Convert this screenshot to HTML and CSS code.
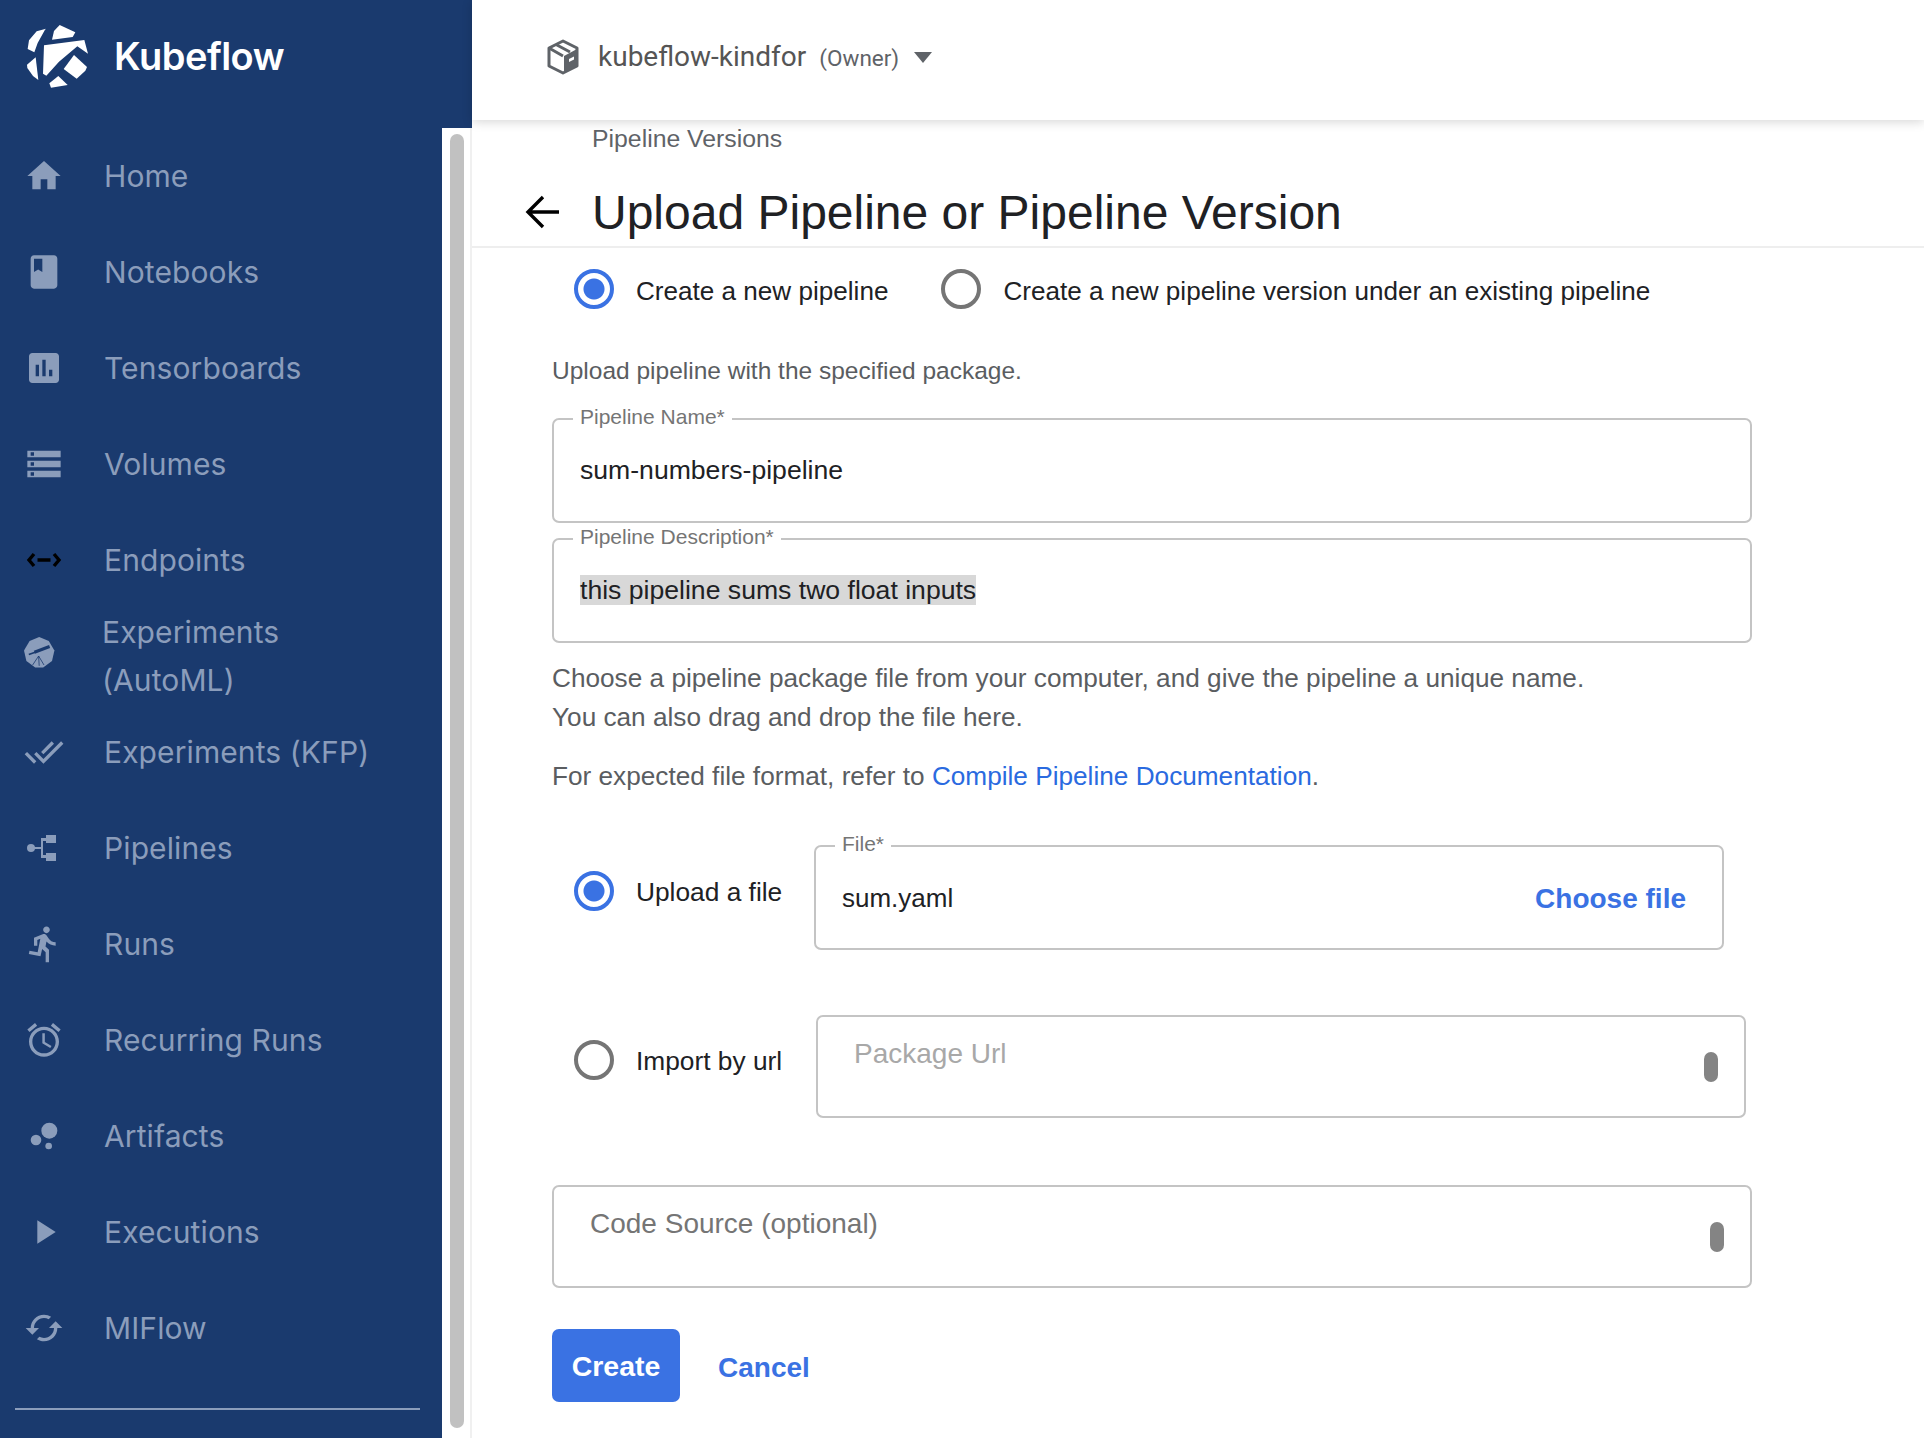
FILE: index.html
```html
<!DOCTYPE html>
<html lang="en">
<head>
<meta charset="utf-8">
<title>Kubeflow</title>
<link rel="stylesheet" href="styles.css">
</head>
<body>
<div class="app">
  <aside class="sidebar">
    <div class="brand">
      <svg class="brand-logo" viewBox="72 72 198 198"><g fill="#fff"><path d="M135 86l-3 3-22 40-10 28-20-10 4-26 23-27z"/><path d="M176 75l47 22-8 14-62 8 6-26z"/><path d="M129 136l121-16 11 41-32-22-55 46-38 42-10-6z"/><path d="M104 172l8 68-16-12-17-24-1-10z"/><path d="M219 165l39 36-5 11-26 24-39-29z"/><path d="M172 228l28 27-50 8-5-13z"/></g></svg>
      <span class="brand-name">Kubeflow</span>
    </div>
    <div class="side-body">
      <nav class="nav">
        <a class="nav-item"><svg class="nav-icon" viewBox="0 0 24 24"><path d="M10 20v-6h4v6h5v-8h3L12 3 2 12h3v8z"/></svg><span class="nav-label">Home</span></a>
        <a class="nav-item"><svg class="nav-icon" viewBox="0 0 24 24"><path d="M18 2H6c-1.1 0-2 .9-2 2v16c0 1.1.9 2 2 2h12c1.1 0 2-.9 2-2V4c0-1.1-.9-2-2-2zM6 4h5v8l-2.5-1.5L6 12V4z"/></svg><span class="nav-label">Notebooks</span></a>
        <a class="nav-item"><svg class="nav-icon" viewBox="0 0 24 24"><path d="M19 3H5c-1.1 0-2 .9-2 2v14c0 1.1.9 2 2 2h14c1.1 0 2-.9 2-2V5c0-1.1-.9-2-2-2zM9 17H7v-7h2v7zm4 0h-2V7h2v10zm4 0h-2v-4h2v4z"/></svg><span class="nav-label">Tensorboards</span></a>
        <a class="nav-item"><svg class="nav-icon" viewBox="0 0 24 24"><path d="M2 20h20v-4H2v4zm2-3h2v2H4v-2zM2 4v4h20V4H2zm4 3H4V5h2v2zm-4 7h20v-4H2v4zm2-3h2v2H4v-2z"/></svg><span class="nav-label">Volumes</span></a>
        <a class="nav-item"><svg class="nav-icon" viewBox="0 0 40 40"><path class="endpoint" d="M10 14l-5 6 5 6M30 14l5 6-5 6M13.500 20h13"/></svg><span class="nav-label">Endpoints</span></a>
        <a class="nav-item nav-item-auto"><svg class="nav-icon" viewBox="-4 -4 50 50"><path d="M20 1l12 5 7 12-3 13-11 8H15L4 31 1 18 8 6z"/><path class="scope" d="M19.300 24.750L11.800 36M19.300 24.750L20 37M19.300 24.750L26 36"/><path class="scope-thin" d="M7 23l8-3"/><path class="scope-bold" d="M14 20l19-7"/></svg><span class="nav-label nav-label-wrap">Experiments (AutoML)</span></a>
        <a class="nav-item"><svg class="nav-icon" viewBox="0 0 24 24"><path d="M18 7l-1.410-1.410-6.340 6.340 1.410 1.410L18 7zm4.240-1.410L11.660 16.170 7.480 12l-1.410 1.410L11.660 19l12-12-1.420-1.410zM.41 13.410L6 19l1.410-1.410L1.830 12 .41 13.410z"/></svg><span class="nav-label">Experiments (KFP)</span></a>
        <a class="nav-item"><svg class="nav-icon" viewBox="0 0 40 40"><circle cx="7" cy="20" r="4"/><path d="M9 19h8v-9h6v3h-4v14h4v3h-6V21H9z"/><rect x="22" y="7" width="10" height="8"/><rect x="22" y="25" width="10" height="8"/></svg><span class="nav-label">Pipelines</span></a>
        <a class="nav-item"><svg class="nav-icon" viewBox="0 0 24 24"><path d="M13.490 5.480c1.100 0 2-.9 2-2s-.9-2-2-2-2 .9-2 2 .9 2 2 2zm-3.600 13.900l1-4.400 2.100 2v6h2v-7.500l-2.100-2 .6-3c1.300 1.500 3.300 2.500 5.500 2.500v-2c-1.900 0-3.500-1-4.300-2.400l-1-1.600c-.4-.6-1-1-1.700-1-.3 0-.5.1-.8.1l-5.200 2.200v4.700h2v-3.400l1.800-.7-1.600 8.100-4.900-1-.4 2 7 1.400z"/></svg><span class="nav-label">Runs</span></a>
        <a class="nav-item"><svg class="nav-icon" viewBox="0 0 24 24"><path d="M22 5.720l-4.600-3.860-1.290 1.530 4.600 3.860L22 5.720zM7.880 3.390L6.600 1.860 2 5.710l1.290 1.530 4.590-3.850zM12.500 8H11v6l4.750 2.850.75-1.230-4-2.370V8zM12 4c-4.970 0-9 4.030-9 9s4.020 9 9 9c4.970 0 9-4.030 9-9s-4.030-9-9-9zm0 16c-3.870 0-7-3.130-7-7s3.130-7 7-7 7 3.130 7 7-3.130 7-7 7z"/></svg><span class="nav-label">Recurring Runs</span></a>
        <a class="nav-item"><svg class="nav-icon" viewBox="0 0 24 24"><circle cx="7.200" cy="14.400" r="3.200"/><circle cx="14.800" cy="18" r="2"/><circle cx="15.200" cy="8.800" r="4.800"/></svg><span class="nav-label">Artifacts</span></a>
        <a class="nav-item"><svg class="nav-icon" viewBox="0 0 24 24"><path d="M8 5v14l11-7z"/></svg><span class="nav-label">Executions</span></a>
        <a class="nav-item"><svg class="nav-icon" viewBox="0 0 24 24"><path d="M19 8l-4 4h3c0 3.310-2.690 6-6 6-1.010 0-1.970-.25-2.800-.7l-1.460 1.460C8.970 19.540 10.430 20 12 20c4.420 0 8-3.580 8-8h3l-4-4zM6 12c0-3.310 2.690-6 6-6 1.010 0 1.970.25 2.800.7l1.460-1.460C15.030 4.460 13.570 4 12 4c-4.420 0-8 3.580-8 8H1l4 4 4-4H6z"/></svg><span class="nav-label">MIFlow</span></a>
        <div class="nav-divider"></div>
      </nav>
      <div class="scroll-track"><div class="scroll-thumb"></div></div>
    </div>
  </aside>

  <main class="main">
    <header class="topbar">
      <svg class="ns-icon" viewBox="0 0 32 36"><path class="ns-outline" d="M16 2l14 7v18l-14 7-14-7V9z"/><path class="ns-fill" d="M17 17l13-7v17l-13 7z"/><path class="ns-outline" d="M2 9l14 8M9 5.500l14 7.500"/><path class="ns-tag" d="M22 20l5-2.500v3l-5 2.500z"/></svg>
      <span class="ns-name">kubeflow-kindfor</span>
      <span class="ns-role">(Owner)</span>
      <span class="ns-caret"></span>
    </header>

    <div class="crumb">Pipeline Versions</div>
    <div class="titlebar">
      <svg class="back" viewBox="0 0 36 36"><path d="M34 18H3M18 3L3 18l15 15"/></svg>
      <h1 class="title">Upload Pipeline or Pipeline Version</h1>
    </div>

    <form class="form">
      <div class="choice-row">
        <span class="radio radio-on"></span>
        <span class="choice-label">Create a new pipeline</span>
        <span class="radio choice-second"></span>
        <span class="choice-label">Create a new pipeline version under an existing pipeline</span>
      </div>

      <p class="hint hint-first">Upload pipeline with the specified package.</p>

      <div class="field field-full field-name">
        <span class="legend">Pipeline Name*</span>
        <span class="value">sum-numbers-pipeline</span>
      </div>
      <div class="field field-full field-desc">
        <span class="legend">Pipeline Description*</span>
        <span class="value"><span class="selected">this pipeline sums two float inputs</span></span>
      </div>

      <p class="hint hint-choose">Choose a pipeline package file from your computer, and give the pipeline a unique name.<br>You can also drag and drop the file here.</p>
      <p class="hint hint-format">For expected file format, refer to <a class="doc-link">Compile Pipeline Documentation</a>.</p>

      <div class="source-row source-file">
        <div class="source-choice source-choice-file">
          <span class="radio radio-on"></span>
          <span class="choice-label">Upload a file</span>
        </div>
        <div class="field field-file">
          <span class="legend">File*</span>
          <span class="value">sum.yaml</span>
          <span class="choose">Choose file</span>
        </div>
      </div>

      <div class="source-row source-url">
        <div class="source-choice source-choice-url">
          <span class="radio"></span>
          <span class="choice-label">Import by url</span>
        </div>
        <div class="field field-url">
          <span class="placeholder placeholder-url">Package Url</span>
          <span class="grip"></span>
        </div>
      </div>

      <div class="field field-full field-code">
        <span class="placeholder placeholder-code">Code Source (optional)</span>
        <span class="grip"></span>
      </div>

      <div class="actions">
        <button class="btn-create" type="button">Create</button>
        <a class="btn-cancel">Cancel</a>
      </div>
    </form>
  </main>
</div>
</body>
</html>
```

FILE: styles.css
```css
* { box-sizing: border-box; }
html, body { margin: 0; height: 100%; overflow: hidden; background: #fff; }
body { font-family: "Liberation Sans", Arial, sans-serif; color: #202124; }
.app { display: flex; height: 1438px; }

/* Sidebar */
.sidebar { width: 472px; flex: none; display: flex; flex-direction: column; }
.brand { height: 128px; flex: none; background: #1a3a6e; display: flex; align-items: flex-start; padding: 24px 0 0 25px; }
.brand-logo { width: 66px; height: 66px; flex: none; }
.brand-name { margin: 10px 0 0 23px; font: 600 38px/44px Inter, "Noto Sans", sans-serif; color: #fff; letter-spacing: -0.5px; }
.side-body { flex: 1; display: flex; min-height: 0; }
.nav { width: 442px; flex: none; background: #1a3a6e; }
.nav-item { height: 96px; display: flex; align-items: center; padding-left: 24px; color: #8b9dbb; }
.nav-icon { width: 40px; height: 40px; flex: none; fill: #8b9dbb; }
.nav-label { margin: -1px 0 0 40px; font: 400 30px/48px Inter, "Noto Sans", sans-serif; letter-spacing: .1px; }
.nav-item-auto { padding-left: 20px; }
.nav-item-auto .nav-icon { margin-top: -6px; }
.nav-item-auto .nav-label { margin-left: 42px; }
.nav-label-wrap { width: 250px; }
.endpoint { fill: none; stroke: #000; stroke-width: 3.4; }
.scope { fill: none; stroke: #1a3a6e; stroke-width: 1; }
.scope-thin { fill: none; stroke: #1a3a6e; stroke-width: 2; }
.scope-bold { fill: none; stroke: #1a3a6e; stroke-width: 4; }
.nav-divider { height: 2px; margin: 32px 22px 0 15px; background: #8b9dbb; }
.scroll-track { width: 30px; flex: none; padding: 6px 6px 10px 8px; background: #fff; border-right: 2px solid #f0f0f0; }
.scroll-thumb { height: 100%; background: #c1c1c1; border-radius: 8px; }

/* Main */
.main { flex: 1; min-width: 0; }
.topbar { height: 120px; display: flex; align-items: center; padding: 0 0 6px 75px; background: #fff; box-shadow: 0 2px 10px rgba(0, 0, 0, .16); position: relative; }
.ns-icon { width: 32px; height: 36px; flex: none; }
.ns-outline { fill: none; stroke: #5f6368; stroke-width: 3; stroke-linejoin: round; }
.ns-fill { fill: #5f6368; }
.ns-tag { fill: #fff; }
.ns-name { margin-left: 19px; font: 400 28px/36px Roboto, sans-serif; color: #555; }
.ns-role { margin-left: 13px; font: 400 22.500px/36px Roboto, sans-serif; color: #5f6368; margin-top: 2px; }
.ns-caret { margin-left: 15px; border: 9px solid transparent; border-top: 11px solid #5f6368; border-bottom: 0; }

.crumb { padding-left: 120px; font-size: 24.800px; line-height: 38px; color: #5f6368; }
.titlebar { height: 90px; display: flex; align-items: flex-start; padding: 20px 0 0 53px; border-bottom: 2px solid #eee; }
.back { width: 36px; height: 36px; margin: 16px 0 0 0; flex: none; fill: none; stroke: #000; stroke-width: 3.400; }
.title { margin: 0 0 0 31px; font-size: 48px; font-weight: 400; line-height: 70px; color: #202124; }

.form { padding: 21px 0 0 80px; }
.choice-row { display: flex; align-items: center; padding-left: 22px; height: 40px; }
.radio { width: 40px; height: 40px; flex: none; border: 4px solid #757575; border-radius: 50%; background: #fff; display: block; }
.radio-on { border-color: #3a72e3; background: radial-gradient(circle, #3a72e3 0, #3a72e3 10px, #fff 11px); }
.choice-label { margin: 3px 0 0 22px; font-size: 26.100px; line-height: 36px; color: #202124; }
.choice-second { margin-left: 53px; }
.hint { margin: 0; font-size: 26.200px; color: #5a5d61; line-height: 39px; }
.hint-first { margin-top: 42px; font-size: 24.500px; }
.hint-choose { margin-top: 16px; }
.hint-format { margin-top: 20px; }
.doc-link { color: #2a6ae0; }

.field { position: relative; height: 105px; border: 2px solid #c4c4c4; border-radius: 7px; background: #fff; display: flex; align-items: center; }
.field-full { width: 1200px; }
.field-full .value { font-size: 26.600px; margin-top: -2px; }
.field-name { margin-top: 28px; }
.field-desc { margin-top: 15px; }
.legend { position: absolute; top: -16px; left: 19px; padding: 0 7px; background: #fff; font-size: 21px; line-height: 26px; color: #757575; }
.value { margin-left: 26px; font-size: 26px; line-height: 32px; color: #202124; }
.selected { background: #d8d8d8; }
.source-row { display: flex; align-items: flex-start; }
.source-file { margin-top: 49px; }
.source-url { margin-top: 65px; }
.source-choice { display: flex; align-items: center; flex: none; padding-left: 22px; }
.source-choice .choice-label { margin-top: 1px; font-size: 26.300px; }
.source-choice-file { width: 262px; padding-top: 26px; }
.source-choice-url { width: 265px; padding-top: 25px; }
.field-file { width: 910px; height: 105px; justify-content: space-between; }
.value + .choose { margin-right: 36px; margin-top: 2px; font-size: 28px; font-weight: 700; color: #3a72e3; }
.field-url { width: 930px; margin-left: -1px; height: 103px; align-items: flex-start; justify-content: space-between; }
.field-code { height: 103px; margin-top: 67px; align-items: flex-start; justify-content: space-between; }
.placeholder { font-size: 28px; line-height: 36px; }
.placeholder-url { margin: 19px 0 0 36px; color: #a8a8a8; }
.placeholder-code { margin: 19px 0 0 36px; color: #757575; }
.grip { width: 14px; height: 30px; margin: 35px 26px 0 0; background: #848484; border-radius: 7px; }

.actions { display: flex; align-items: flex-start; margin-top: 41px; }
.btn-create { width: 128px; height: 73px; padding: 2px 0 0; border: 0; border-radius: 7px; background: #3a72e3; color: #fff; font: 700 28.500px "Liberation Sans", Arial, sans-serif; }
.btn-cancel { margin: 21px 0 0 38px; font-size: 28px; font-weight: 700; line-height: 36px; color: #3a72e3; }
```
